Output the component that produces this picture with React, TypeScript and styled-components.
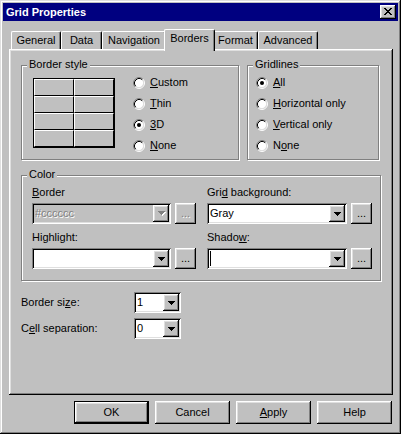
import React from 'react';
import styled, { createGlobalStyle, css } from 'styled-components';

const FACE = '#c0c0c0';
const SHADOW = '#808080';
const HILITE = '#ffffff';
const LIGHT = '#dfdfdf';
const DARK = '#000000';

const GlobalStyle = createGlobalStyle`
  * { box-sizing: border-box; }
  html, body { margin: 0; padding: 0; background: ${FACE}; }
  body {
    font-family: "Liberation Sans", Arial, sans-serif;
    font-size: 11px;
    line-height: 13px;
    color: #000;
  }
  svg { display: block; }
`;

const raised = css`
  background: ${FACE};
  box-shadow:
    inset -1px -1px 0 ${DARK},
    inset 1px 1px 0 ${HILITE},
    inset -2px -2px 0 ${SHADOW},
    inset 2px 2px 0 ${LIGHT};
`;

const sunken = css`
  box-shadow:
    inset 1px 1px 0 ${SHADOW},
    inset -1px -1px 0 ${HILITE},
    inset 2px 2px 0 ${DARK},
    inset -2px -2px 0 ${LIGHT};
`;

const etchedText = css`
  color: ${SHADOW};
  text-shadow: 1px 1px 0 ${HILITE};
`;

const Window = styled.div`
  width: 401px;
  height: 434px;
  padding: 3px;
  display: flex;
  flex-direction: column;
  background: ${FACE};
  box-shadow:
    inset -1px -1px 0 ${DARK},
    inset 1px 1px 0 ${LIGHT},
    inset -2px -2px 0 ${SHADOW},
    inset 2px 2px 0 ${HILITE};
`;

const TitleBar = styled.div`
  height: 18px;
  display: flex;
  align-items: center;
  justify-content: space-between;
  padding: 0 2px 0 3px;
  background: #000080;
`;

const Title = styled.span`
  color: #fff;
  font-weight: bold;
`;

const CloseButton = styled.div`
  width: 16px;
  height: 14px;
  display: flex;
  align-items: flex-start;
  justify-content: center;
  padding-top: 3px;
  ${raised}
`;

const Body = styled.div`
  flex: 1;
  display: flex;
  flex-direction: column;
  padding: 8px 5px 0 6px;
`;

const TabStrip = styled.div`
  height: 20px;
  display: flex;
  align-items: flex-end;
  padding-left: 2px;
`;

const Tab = styled.div<{ $width: number; $active?: boolean }>`
  position: relative;
  width: ${(p) => p.$width}px;
  height: 18px;
  padding-top: 2px;
  text-align: center;
  background: ${FACE};
  border-top: 1px solid ${HILITE};
  border-left: 1px solid ${HILITE};
  border-right: 1px solid ${DARK};
  border-radius: 2px 2px 0 0;
  box-shadow: inset -1px 0 0 ${SHADOW};

  ${(p) =>
    p.$active &&
    css`
      z-index: 1;
      width: ${p.$width + 4}px;
      height: 22px;
      margin: 0 -2px -2px;
    `}
`;

const Panel = styled.div`
  height: 346px;
  padding: 16px 12px;
  ${raised}
`;

const TopRow = styled.div`
  display: grid;
  grid-template-columns: 218px 132px;
  column-gap: 8px;
`;

const Group = styled.div<{ $height: number; $pad: string }>`
  position: relative;
  display: flex;
  align-items: flex-start;
  height: ${(p) => p.$height}px;
  padding: ${(p) => p.$pad};
  border: 1px solid ${SHADOW};
  box-shadow: inset 1px 1px 0 ${HILITE}, 1px 1px 0 ${HILITE};
`;

const GroupLabel = styled.span`
  position: absolute;
  top: -8px;
  left: 5px;
  padding: 0 2px;
  background: ${FACE};
`;

const GridPreview = styled.div`
  margin-top: 6px;
  width: 82px;
  height: 70px;
  display: grid;
  grid-template-columns: repeat(2, 40px);
  grid-template-rows: repeat(4, 17px);
  border: 1px solid ${DARK};
`;

const GridCell = styled.div`
  border-top: 1px solid ${HILITE};
  border-left: 1px solid ${HILITE};
  border-right: 1px solid ${DARK};
  border-bottom: 1px solid ${DARK};
`;

const RadioList = styled.div<{ $indent?: number }>`
  display: flex;
  flex-direction: column;
  margin-left: ${(p) => p.$indent ?? 0}px;
`;

const RadioRow = styled.label`
  height: 21px;
  display: flex;
  align-items: center;
  gap: 5px;
`;

const Key = styled.span`
  text-decoration: underline;
`;

const ColorGroup = styled(Group)`
  display: block;
  margin-top: 15px;
`;

const ColorGrid = styled.div`
  display: grid;
  grid-template-columns: 164px 165px;
  column-gap: 11px;
  row-gap: 7px;
`;

const Field = styled.div`
  display: flex;
  flex-direction: column;
  gap: 4px;
`;

const ComboRow = styled.div`
  display: flex;
  gap: 4px;
`;

const ComboBox = styled.div<{ $disabled?: boolean; $width?: number }>`
  ${(p) => (p.$width ? `width: ${p.$width}px;` : 'flex: 1;')}
  height: 21px;
  display: flex;
  align-items: center;
  padding: 2px 2px 2px 3px;
  background: ${(p) => (p.$disabled ? FACE : '#fff')};
  ${sunken}
`;

const ComboText = styled.span<{ $disabled?: boolean }>`
  flex: 1;
  white-space: nowrap;
  overflow: hidden;
  ${(p) => p.$disabled && etchedText}
`;

const Caret = styled.span`
  width: 1px;
  height: 15px;
  background: ${DARK};
`;

const DropButton = styled.div`
  width: 16px;
  height: 17px;
  display: flex;
  align-items: center;
  justify-content: center;
  padding-left: 1px;
  ${raised}
`;

const DotsButton = styled.div<{ $disabled?: boolean }>`
  width: 21px;
  height: 21px;
  display: flex;
  align-items: center;
  justify-content: center;
  padding-bottom: 1px;
  ${raised}
  ${(p) => p.$disabled && etchedText}
`;

const Settings = styled.div`
  margin-top: 11px;
  display: flex;
  flex-direction: column;
  gap: 5px;
`;

const SettingRow = styled.div`
  height: 21px;
  display: flex;
  align-items: center;
`;

const SettingLabel = styled.span`
  width: 113px;
`;

const ButtonRow = styled.div`
  margin-top: 6px;
  padding-right: 1px;
  display: flex;
  justify-content: flex-end;
  gap: 6px;
`;

const Button = styled.button<{ $default?: boolean }>`
  width: 75px;
  height: 23px;
  padding: 0;
  font: inherit;
  color: #000;
  border: ${(p) => (p.$default ? `1px solid ${DARK}` : 'none')};
  ${raised}
`;

const Pixels: React.FC<{ rows: string[]; color: string; shadow?: string }> = ({
  rows,
  color,
  shadow,
}) => {
  const w = rows[0].length + (shadow ? 1 : 0);
  const h = rows.length + (shadow ? 1 : 0);
  const rects = (fill: string, dx: number) =>
    rows.flatMap((row, y) =>
      row
        .split('')
        .map((c, x) =>
          c === '#' ? (
            <rect key={`${fill}${x}-${y}`} x={x + dx} y={y + dx} width={1} height={1} fill={fill} />
          ) : null,
        ),
    );
  return (
    <svg width={w} height={h} viewBox={`0 0 ${w} ${h}`} shapeRendering="crispEdges">
      {shadow && rects(shadow, 1)}
      {rects(color, 0)}
    </svg>
  );
};

const closeGlyph = ['##....##', '.##..##.', '..####..', '...##...', '..####..', '.##..##.', '##....##'];
const arrowGlyph = ['#######', '.#####.', '..###..', '...#...'];

const Radio: React.FC<{ checked?: boolean }> = ({ checked }) => (
  <svg width={12} height={12} viewBox="0 0 12 12">
    <circle cx={6} cy={6} r={4.5} fill="#fff" />
    <path d="M2.11 9.89A5.5 5.5 0 0 1 9.89 2.11" stroke={SHADOW} fill="none" />
    <path d="M9.89 2.11A5.5 5.5 0 0 1 2.11 9.89" stroke={HILITE} fill="none" />
    <path d="M2.82 9.18A4.5 4.5 0 0 1 9.18 2.82" stroke={DARK} fill="none" />
    <path d="M9.18 2.82A4.5 4.5 0 0 1 2.82 9.18" stroke={LIGHT} fill="none" />
    {checked && <circle cx={6} cy={6} r={2} fill={DARK} />}
  </svg>
);

const Combo: React.FC<{
  value?: React.ReactNode;
  disabled?: boolean;
  caret?: boolean;
  width?: number;
}> = ({ value, disabled, caret, width }) => (
  <ComboBox $disabled={disabled} $width={width}>
    {caret && <Caret />}
    <ComboText $disabled={disabled}>{value}</ComboText>
    <DropButton>
      {disabled ? (
        <Pixels rows={arrowGlyph} color={SHADOW} shadow={HILITE} />
      ) : (
        <Pixels rows={arrowGlyph} color={DARK} />
      )}
    </DropButton>
  </ComboBox>
);

const tabs = [
  { label: 'General', width: 50 },
  { label: 'Data', width: 41 },
  { label: 'Navigation', width: 64 },
  { label: 'Borders', width: 47, active: true },
  { label: 'Format', width: 45 },
  { label: 'Advanced', width: 60 },
];

const App: React.FC = () => {
  return (
    <>
      <GlobalStyle />
      <Window>
        <TitleBar>
          <Title>Grid Properties</Title>
          <CloseButton>
            <Pixels rows={closeGlyph} color={DARK} />
          </CloseButton>
        </TitleBar>

        <Body>
          <TabStrip>
            {tabs.map((t) => (
              <Tab key={t.label} $width={t.width} $active={t.active}>
                {t.label}
              </Tab>
            ))}
          </TabStrip>

          <Panel>
            <TopRow>
              <Group $height={95} $pad="6px 0 0 11px">
                <GroupLabel>Border style</GroupLabel>
                <GridPreview>
                  {Array.from({ length: 8 }, (_, i) => (
                    <GridCell key={i} />
                  ))}
                </GridPreview>
                <RadioList $indent={18}>
                  <RadioRow>
                    <Radio />
                    <span>
                      <Key>C</Key>ustom
                    </span>
                  </RadioRow>
                  <RadioRow>
                    <Radio />
                    <span>
                      <Key>T</Key>hin
                    </span>
                  </RadioRow>
                  <RadioRow>
                    <Radio checked />
                    <span>
                      <Key>3</Key>D
                    </span>
                  </RadioRow>
                  <RadioRow>
                    <Radio />
                    <span>
                      <Key>N</Key>one
                    </span>
                  </RadioRow>
                </RadioList>
              </Group>

              <Group $height={95} $pad="6px 0 0 8px">
                <GroupLabel>Gridlines</GroupLabel>
                <RadioList>
                  <RadioRow>
                    <Radio checked />
                    <span>
                      <Key>A</Key>ll
                    </span>
                  </RadioRow>
                  <RadioRow>
                    <Radio />
                    <span>
                      <Key>H</Key>orizontal only
                    </span>
                  </RadioRow>
                  <RadioRow>
                    <Radio />
                    <span>
                      <Key>V</Key>ertical only
                    </span>
                  </RadioRow>
                  <RadioRow>
                    <Radio />
                    <span>
                      N<Key>o</Key>ne
                    </span>
                  </RadioRow>
                </RadioList>
              </Group>
            </TopRow>

            <ColorGroup $height={106} $pad="10px 0 0 10px">
              <GroupLabel>Color</GroupLabel>
              <ColorGrid>
                <Field>
                  <span>
                    <Key>B</Key>order
                  </span>
                  <ComboRow>
                    <Combo value="#cccccc" disabled />
                    <DotsButton $disabled>...</DotsButton>
                  </ComboRow>
                </Field>
                <Field>
                  <span>
                    Gri<Key>d</Key> background:
                  </span>
                  <ComboRow>
                    <Combo value="Gray" />
                    <DotsButton>...</DotsButton>
                  </ComboRow>
                </Field>
                <Field>
                  <span>Highlight:</span>
                  <ComboRow>
                    <Combo />
                    <DotsButton>...</DotsButton>
                  </ComboRow>
                </Field>
                <Field>
                  <span>
                    Shado<Key>w</Key>:
                  </span>
                  <ComboRow>
                    <Combo caret />
                    <DotsButton>...</DotsButton>
                  </ComboRow>
                </Field>
              </ColorGrid>
            </ColorGroup>

            <Settings>
              <SettingRow>
                <SettingLabel>
                  Border si<Key>z</Key>e:
                </SettingLabel>
                <Combo value="1" width={47} />
              </SettingRow>
              <SettingRow>
                <SettingLabel>
                  C<Key>e</Key>ll separation:
                </SettingLabel>
                <Combo value="0" width={47} />
              </SettingRow>
            </Settings>
          </Panel>

          <ButtonRow>
            <Button $default>OK</Button>
            <Button>Cancel</Button>
            <Button>
              <Key>A</Key>pply
            </Button>
            <Button>Help</Button>
          </ButtonRow>
        </Body>
      </Window>
    </>
  );
};

export default App;
